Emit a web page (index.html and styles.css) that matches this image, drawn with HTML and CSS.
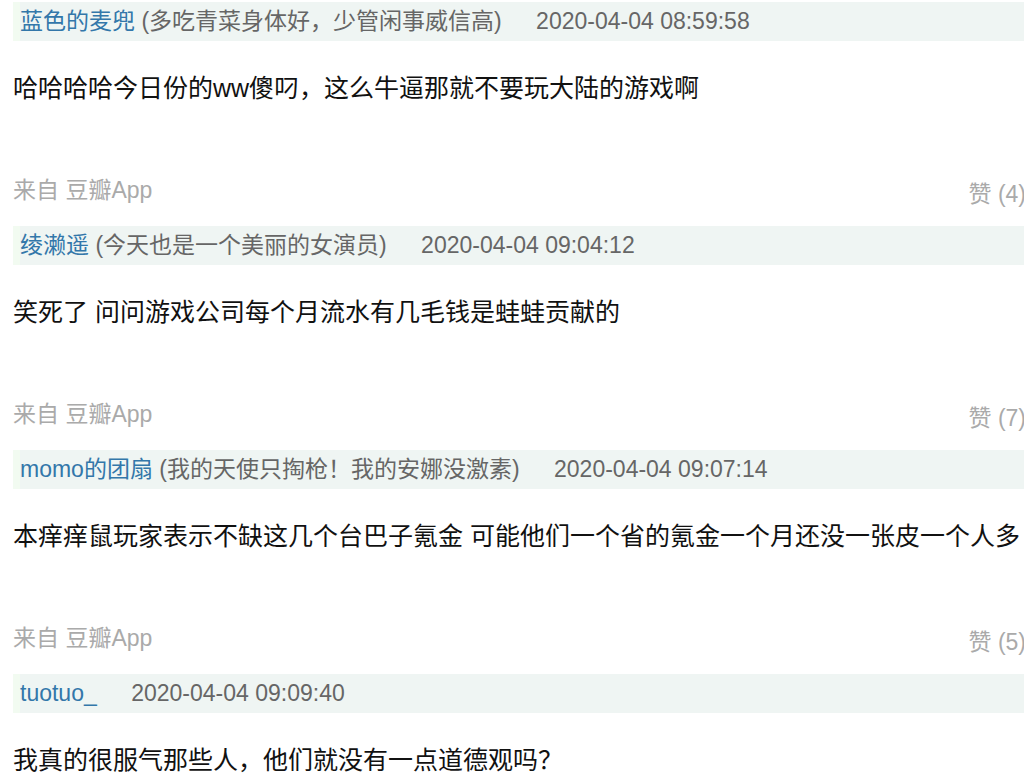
FILE: index.html
```html
<!DOCTYPE html>
<html lang="zh">
<head>
  <meta charset="UTF-8">
  <title>豆瓣 回应</title>
  <link rel="stylesheet" href="styles.css">
</head>
<body>
  <div class="comments">
    <div class="comment">
      <div class="comment-head">
        <a class="author" href="#">蓝色的麦兜</a> <span class="sign">(多吃青菜身体好，少管闲事威信高)</span>
        <span class="pubtime">2020-04-04 08:59:58</span>
      </div>
      <p class="comment-text">哈哈哈哈今日份的ww傻叼，这么牛逼那就不要玩大陆的游戏啊</p>
      <div class="comment-foot">
        <span class="from">来自 豆瓣App</span>
        <span class="vote">赞 (4)</span>
      </div>
    </div>

    <div class="comment">
      <div class="comment-head">
        <a class="author" href="#">绫濑遥</a> <span class="sign">(今天也是一个美丽的女演员)</span>
        <span class="pubtime">2020-04-04 09:04:12</span>
      </div>
      <p class="comment-text">笑死了 问问游戏公司每个月流水有几毛钱是蛙蛙贡献的</p>
      <div class="comment-foot">
        <span class="from">来自 豆瓣App</span>
        <span class="vote">赞 (7)</span>
      </div>
    </div>

    <div class="comment">
      <div class="comment-head">
        <a class="author" href="#">momo的团扇</a> <span class="sign">(我的天使只掏枪！我的安娜没激素)</span>
        <span class="pubtime">2020-04-04 09:07:14</span>
      </div>
      <p class="comment-text">本痒痒鼠玩家表示不缺这几个台巴子氪金 可能他们一个省的氪金一个月还没一张皮一个人多</p>
      <div class="comment-foot">
        <span class="from">来自 豆瓣App</span>
        <span class="vote">赞 (5)</span>
      </div>
    </div>

    <div class="comment">
      <div class="comment-head">
        <a class="author" href="#">tuotuo_</a>
        <span class="pubtime">2020-04-04 09:09:40</span>
      </div>
      <p class="comment-text">我真的很服气那些人，他们就没有一点道德观吗？</p>
    </div>
  </div>
</body>
</html>
```

FILE: styles.css
```css
html {
  overflow: hidden;
}

body {
  margin: 0;
  padding: 2px 0 0 13px;
  font-family: "Liberation Sans", Arial, "Noto Sans CJK SC", sans-serif;
  background: #fff;
}

.comments {
  width: 1013px;
}

.comment {
  height: 224px;
}

.comment-head {
  height: 39px;
  line-height: 39px;
  font-size: 23px;
  white-space: nowrap;
  background: #eff5f3;
  border-left: 7px solid #f2fbf1;
  color: #666;
}

.author {
  color: #3377aa;
  text-decoration: none;
}

.pubtime {
  margin-left: 28px;
}

.comment-text {
  margin: 27px 0 0;
  font-size: 25px;
  line-height: 40px;
  color: #111;
  white-space: nowrap;
}

.comment-foot {
  display: flex;
  justify-content: space-between;
  margin-top: 62px;
  height: 40px;
  font-size: 23px;
  line-height: 40px;
  color: #aaa;
}

.vote {
  padding-top: 4px;
  white-space: nowrap;
}
```
